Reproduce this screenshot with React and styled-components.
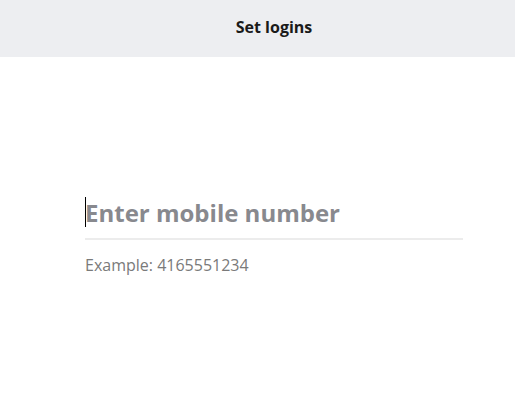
import styled, { createGlobalStyle } from "styled-components";

const GlobalStyle = createGlobalStyle`
  body {
    margin: 0;
    font-family: "Open Sans", "Liberation Sans", sans-serif;
    background: #ffffff;
  }
`;

const Page = styled.div`
  display: flex;
  flex-direction: column;
  min-height: 397px;
`;

const Header = styled.header`
  height: 57px;
  display: flex;
  align-items: center;
  justify-content: center;
  padding-left: 33px;
  padding-bottom: 4px;
  box-sizing: border-box;
  background-color: rgb(237, 238, 241);
`;

const Title = styled.h1`
  margin: 0;
  font-size: 16px;
  font-weight: 700;
  color: #1a1a1a;
`;

const Form = styled.div`
  padding: 140px 52px 0 85px;
`;

const Field = styled.div`
  position: relative;
  border-bottom: 2px solid rgb(236, 236, 236);
  padding-bottom: 11px;
`;

const PhoneInput = styled.input`
  display: block;
  width: 100%;
  height: 30px;
  box-sizing: border-box;
  border: none;
  outline: none;
  padding: 0;
  font-family: inherit;
  font-size: 24px;
  font-weight: 700;
  color: #333;
  caret-color: transparent;

  &::placeholder {
    color: rgb(136, 137, 142);
  }
`;

const Caret = styled.span`
  position: absolute;
  left: 0;
  top: 0;
  width: 1px;
  height: 30px;
  background: #000;
  pointer-events: none;
`;

const Hint = styled.p`
  margin: 14px 0 0;
  font-size: 16px;
  line-height: 22px;
  color: rgb(122, 122, 122);
`;

function App() {
  return (
    <>
      <GlobalStyle />
      <Page>
        <Header>
          <Title>Set logins</Title>
        </Header>
        <Form>
          <Field>
            <PhoneInput type="tel" placeholder="Enter mobile number" />
            <Caret />
          </Field>
          <Hint>Example: 4165551234</Hint>
        </Form>
      </Page>
    </>
  );
}

export default App;
